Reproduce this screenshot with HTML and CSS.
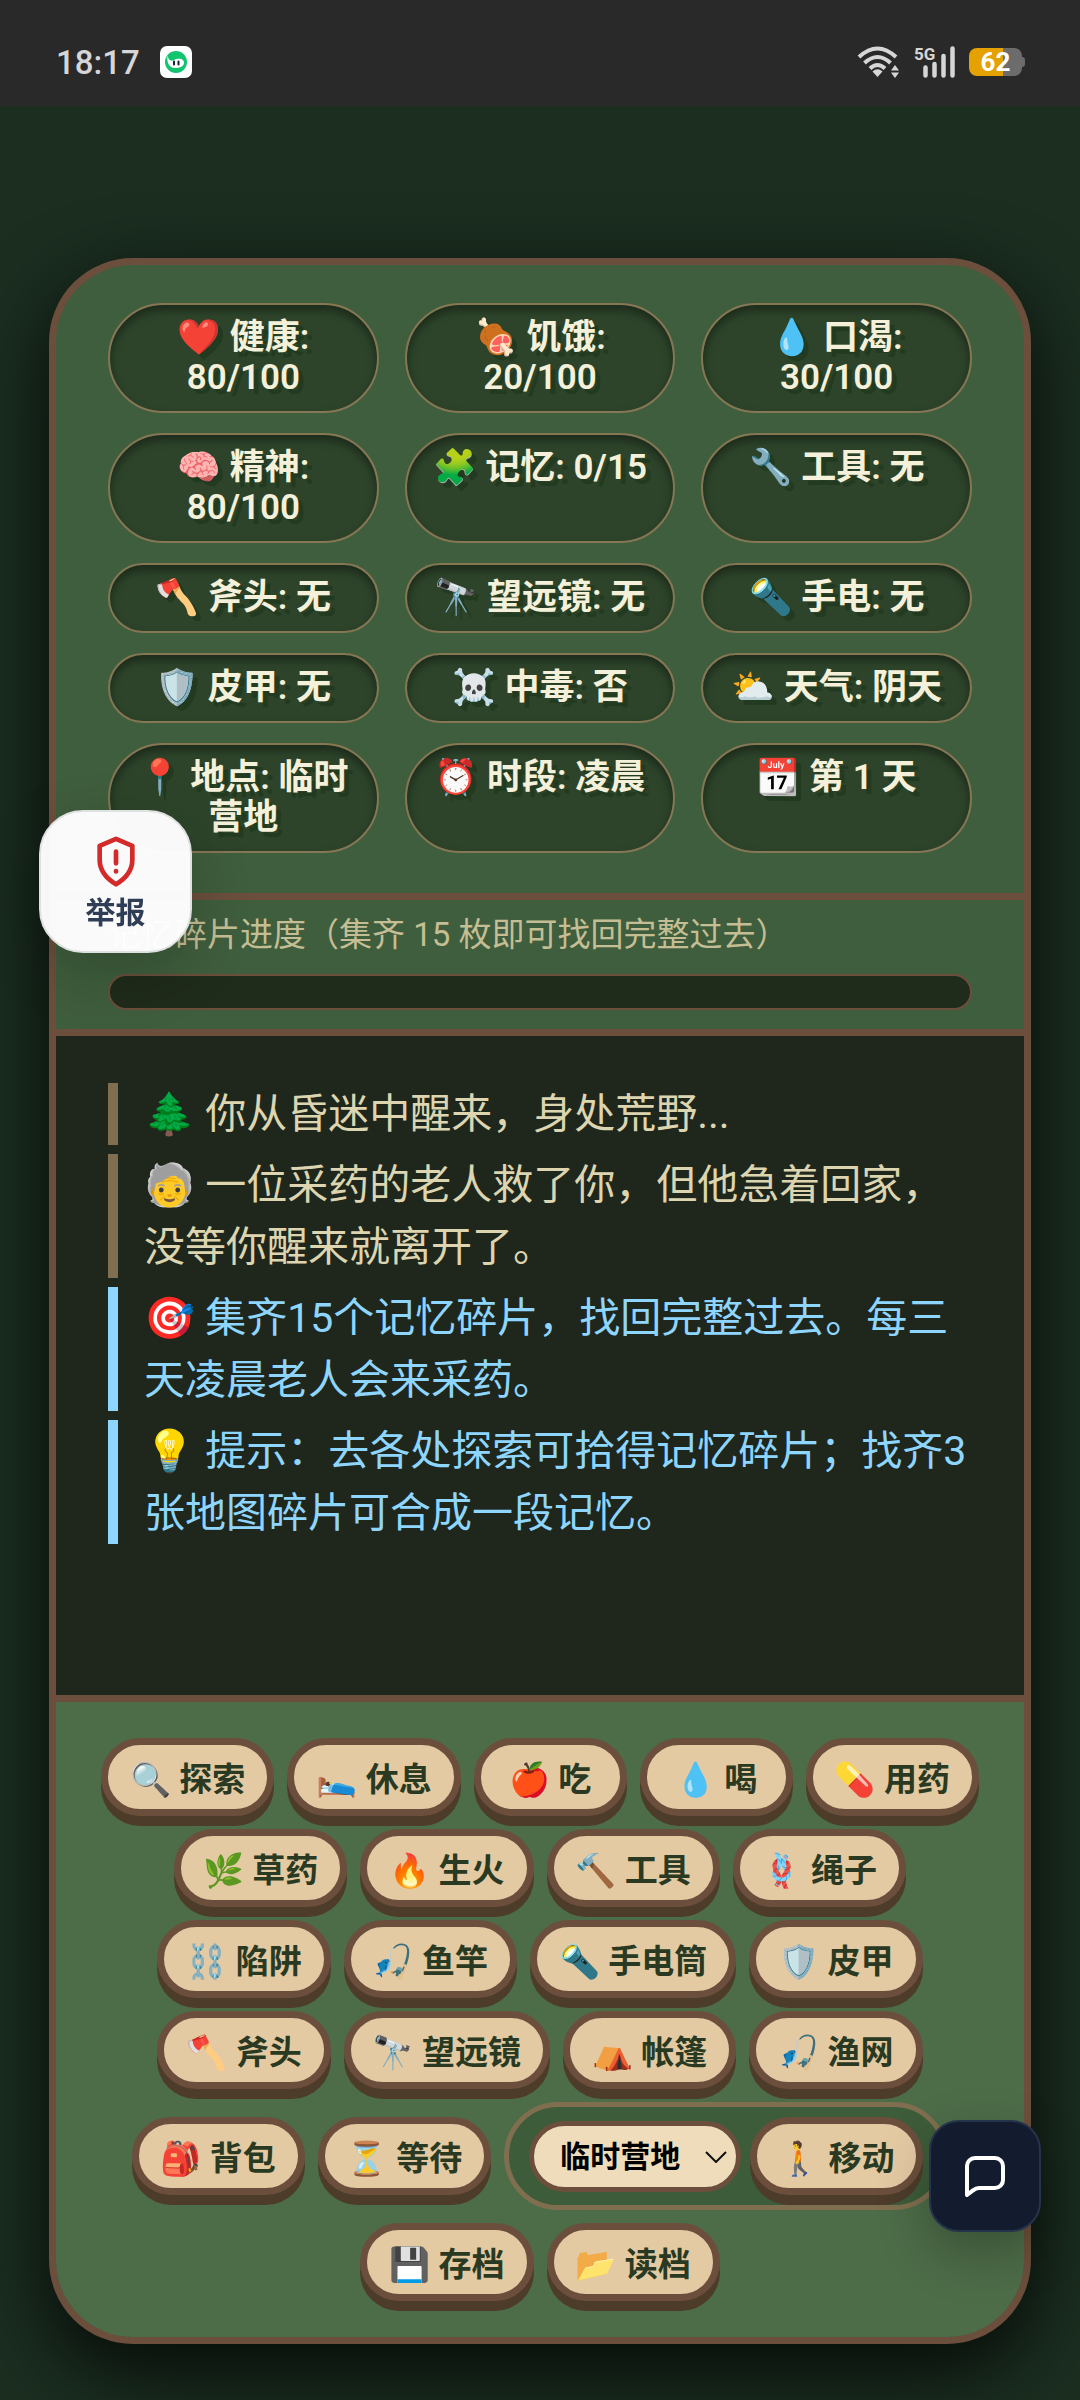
FILE: index.html
```html
<!DOCTYPE html>
<html lang="zh-CN">
<head>
<meta charset="utf-8">
<meta name="viewport" content="width=device-width, initial-scale=1">
<title>荒野求生</title>
<link rel="stylesheet" href="styles.css">
</head>
<body>
<header class="statusbar">
  <div class="statusbar-group">
    <time class="clock">18:17</time>
    <svg class="app-icon" viewBox="0 0 32 32" aria-hidden="true">
      <rect width="32" height="32" rx="7" fill="#fff"/>
      <circle cx="16" cy="16" r="11" fill="#12c46f"/>
      <path d="M7.500 9.500c1 5 3.500 6 6.500 4.500 4-2.500 10-1.500 10 2.500 0 4-4 5.500-9 5.500-5.500 0-8.500-5-7.500-12.500z" fill="#fff"/>
      <path d="M14 15.500v3M18.500 15.500v3" stroke="#123" stroke-width="2" stroke-linecap="round"/>
    </svg>
  </div>
  <div class="statusbar-group statusbar-right">
    <svg class="wifi" viewBox="0 0 44 32" aria-hidden="true">
      <g fill="none" stroke="#d6d6d6" stroke-width="4">
        <path d="M2 11q18.500-17 37 0"/><path d="M7.500 17q13-12 26 0"/><path d="M13 22.500q7.500-7 15 0"/>
      </g>
      <path d="M20.500 31l-5-5.500q5-4.500 10 0z" fill="#d6d6d6"/>
      <path d="M34 24.500l4-5.500 4 5.500zM34 26.500l4 5.500 4-5.500z" fill="#d6d6d6"/>
    </svg>
    <svg class="signal" viewBox="0 0 42 32" aria-hidden="true">
      <text class="signal-label" x="0" y="14">5G</text>
      <path d="M11.500 21.500v8M20.500 18v11.500M29.500 10v19.500M38.500 2.500v27" stroke="#d6d6d6" stroke-width="4.500" stroke-linecap="round"/>
    </svg>
    <div class="battery">62</div>
  </div>
</header>

<main class="game">
  <section class="stats" aria-label="状态">
    <div class="stat">❤️ 健康: 80/100</div>
    <div class="stat">🍖 饥饿: 20/100</div>
    <div class="stat">💧 口渴: 30/100</div>
    <div class="stat">🧠 精神: 80/100</div>
    <div class="stat">🧩 记忆: 0/15</div>
    <div class="stat">🔧 工具: 无</div>
    <div class="stat">🪓 斧头: 无</div>
    <div class="stat">🔭 望远镜: 无</div>
    <div class="stat">🔦 手电: 无</div>
    <div class="stat">🛡️ 皮甲: 无</div>
    <div class="stat">☠️ 中毒: 否</div>
    <div class="stat">⛅ 天气: 阴天</div>
    <div class="stat">📍 地点: 临时营地</div>
    <div class="stat">⏰ 时段: 凌晨</div>
    <div class="stat">📆 第 1 天</div>
  </section>

  <section class="memory">
    <p class="memory-label" id="memory-label">记忆碎片进度（集齐 15 枚即可找回完整过去）</p>
    <div class="memory-bar" role="progressbar" aria-labelledby="memory-label" aria-valuemin="0" aria-valuemax="15" aria-valuenow="0"></div>
  </section>

  <section class="log" aria-label="日志">
    <p class="entry">🌲 你从昏迷中醒来，身处荒野...</p>
    <p class="entry">🧓 一位采药的老人救了你，但他急着回家，没等你醒来就离开了。</p>
    <p class="entry entry-info">🎯 集齐15个记忆碎片，找回完整过去。每三天凌晨老人会来采药。</p>
    <p class="entry entry-info">💡 提示：去各处探索可拾得记忆碎片；找齐3张地图碎片可合成一段记忆。</p>
  </section>

  <section class="actions" aria-label="行动">
    <button class="action" type="button">🔍 探索</button>
    <button class="action" type="button">🛌 休息</button>
    <button class="action" type="button">🍎 吃</button>
    <button class="action" type="button">💧 喝</button>
    <button class="action" type="button">💊 用药</button>
    <button class="action" type="button">🌿 草药</button>
    <button class="action" type="button">🔥 生火</button>
    <button class="action" type="button">🔨 工具</button>
    <button class="action" type="button">🪢 绳子</button>
    <button class="action" type="button">⛓️ 陷阱</button>
    <button class="action" type="button">🎣 鱼竿</button>
    <button class="action" type="button">🔦 手电筒</button>
    <button class="action" type="button">🛡️ 皮甲</button>
    <button class="action" type="button">🪓 斧头</button>
    <button class="action" type="button">🔭 望远镜</button>
    <button class="action" type="button">⛺ 帐篷</button>
    <button class="action" type="button">🎣 渔网</button>
    <button class="action" type="button">🎒 背包</button>
    <button class="action" type="button">⏳ 等待</button>
    <div class="travel">
      <div class="place">
        <select class="place-select" aria-label="目的地">
          <option>临时营地</option>
        </select>
        <svg class="place-arrow" viewBox="0 0 22 12" aria-hidden="true"><path d="M1 1l10 10 10-10" fill="none" stroke="#111" stroke-width="2"/></svg>
      </div>
      <button class="action" type="button">🚶 移动</button>
    </div>
    <div class="saves">
      <button class="action" type="button">💾 存档</button>
      <button class="action" type="button">📂 读档</button>
    </div>
  </section>
</main>

<button class="report" type="button">
  <svg class="report-icon" viewBox="0 0 24 24" aria-hidden="true">
    <path d="M12 2.500l7 3v6c0 4.500-2.800 8-7 10.500-4.200-2.500-7-6-7-10.500v-6z" fill="none" stroke="#d42a2a" stroke-width="2" stroke-linejoin="round"/>
    <path d="M12 8v5M12 16.300v.2" stroke="#d42a2a" stroke-width="2" stroke-linecap="round"/>
  </svg>
  <span>举报</span>
</button>
<button class="chat" type="button" aria-label="消息">
  <svg class="chat-icon" viewBox="0 0 24 24" aria-hidden="true">
    <path d="M3 7a4 4 0 0 1 4-4h10a4 4 0 0 1 4 4v7a4 4 0 0 1-4 4H9q-1.500 0-3 1.200L3 21.500z" fill="none" stroke="#fff" stroke-width="2" stroke-linejoin="round"/>
  </svg>
</button>
</body>
</html>
```

FILE: styles.css
```css
* { box-sizing: border-box; }

body {
  margin: 0;
  min-height: 100vh;
  background: #1b2e20;
  font-family: Roboto, "Noto Sans CJK SC", "Noto Color Emoji", sans-serif;
}

button, select { font: inherit; margin: 0; cursor: pointer; }
p { margin: 0; }

.statusbar {
  display: flex;
  justify-content: space-between;
  align-items: center;
  height: 106px;
  padding: 18px 58px 0 56px;
  background: #292929;
  color: #d6d6d6;
}
.statusbar-group { display: flex; align-items: center; gap: 20px; }
.statusbar-right { gap: 13px; }
.clock { font-size: 33px; font-weight: 500; }
.app-icon { width: 32px; height: 32px; }
.wifi { width: 44px; height: 32px; }
.signal { width: 42px; height: 32px; overflow: visible; }
.signal-label { font-size: 17px; font-weight: 700; fill: #d6d6d6; }
.battery {
  position: relative;
  width: 53px;
  height: 28px;
  border-radius: 8px;
  background: linear-gradient(90deg, #e5a100 65%, #6c6c6c 65%);
  color: #fff;
  font-size: 26px;
  font-weight: 700;
  line-height: 28px;
  text-align: center;
}
.battery::after {
  content: "";
  position: absolute;
  top: 9px;
  left: 100%;
  width: 3px;
  height: 10px;
  border-radius: 0 3px 3px 0;
  background: #6c6c6c;
}

.game {
  margin: 152px 49px 56px;
  border: 7px solid #6b4f3c;
  border-radius: 84px;
  background: #3f5e3d;
  box-shadow: 0 26px 78px rgba(0, 0, 0, .8);
  overflow: hidden;
}

.stats {
  display: grid;
  grid-template-columns: repeat(3, 1fr);
  gap: 20px 26px;
  padding: 38px 52px 40px;
  border-bottom: 7px solid #6b4f3c;
}
.stat {
  padding: 13px 22px;
  border: 2px solid #857654;
  border-radius: 56px;
  background: #2d442a;
  box-shadow: inset 0 5px 10px rgba(0, 0, 0, .4);
  color: #f4f0da;
  font-size: 35px;
  font-weight: 600;
  line-height: 40px;
  text-align: center;
  text-shadow: 5px 5px 0 #223a1f;
}

.memory { padding: 14px 52px 19px; border-bottom: 7px solid #6b4f3c; }
.memory-label {
  margin-bottom: 18px;
  color: #c5bd93;
  font-size: 33px;
  line-height: 42px;
}
.memory-bar {
  height: 36px;
  border: 2px solid #6b4f3c;
  border-radius: 18px;
  background: #1f2b1b;
}

.log {
  display: flex;
  flex-direction: column;
  gap: 9px;
  min-height: 659px;
  padding: 47px 52px;
  background: #1f271d;
}
.entry {
  padding-left: 26px;
  border-left: 10px solid #7f6f50;
  color: #ddd5b0;
  font-size: 41px;
  line-height: 62px;
}
.entry-info { border-color: #8fd6ff; color: #8fd6ff; }

.actions {
  display: flex;
  flex-wrap: wrap;
  justify-content: center;
  align-items: center;
  gap: 13px;
  padding: 36px;
  border-top: 7px solid #6b4f3c;
  background: #4d6c48;
}
.action {
  min-width: 153px;
  height: 78px;
  padding: 0 22px;
  border: 7px solid #6b4f3c;
  border-radius: 39px;
  background: #e4caa3;
  box-shadow: 0 10px 0 #4d3c2a;
  color: #2a3a22;
  font-size: 33px;
  font-weight: 700;
  white-space: nowrap;
}
.travel {
  display: flex;
  align-items: center;
  gap: 9px;
  padding: 10px 20px;
  border: 5px solid #7f6f50;
  border-radius: 56px;
  background: #3d5c39;
}
.place { position: relative; display: flex; }
.place-select {
  width: 212px;
  height: 71px;
  padding: 0 50px 0 26px;
  border: 5px solid #6b4f3c;
  border-radius: 36px;
  background: #efdcbb;
  color: #000;
  font-size: 30px;
  font-weight: 700;
  appearance: none;
}
.place-arrow {
  position: absolute;
  top: 30px;
  right: 14px;
  width: 22px;
  height: 12px;
  pointer-events: none;
}
.saves { display: flex; justify-content: center; gap: 13px; width: 100%; }

.report, .chat {
  position: fixed;
  display: flex;
  flex-direction: column;
  align-items: center;
  justify-content: center;
}
.report {
  top: 810px;
  left: 39px;
  gap: 6px;
  width: 153px;
  height: 143px;
  border: 2px solid #dde2e0;
  border-radius: 44px;
  background: rgba(255, 255, 255, .97);
  box-shadow: 0 20px 60px rgba(0, 0, 0, .2);
  color: #2f3e56;
  font-size: 30px;
  font-weight: 700;
  line-height: 36px;
}
.report-icon { width: 56px; height: 56px; }
.chat {
  right: 39px;
  bottom: 168px;
  width: 112px;
  height: 112px;
  border: 2px solid #26334c;
  border-radius: 30px;
  background: #131c2e;
  box-shadow: 0 20px 50px rgba(0, 0, 0, .25);
}
.chat-icon { width: 48px; height: 48px; }
```
